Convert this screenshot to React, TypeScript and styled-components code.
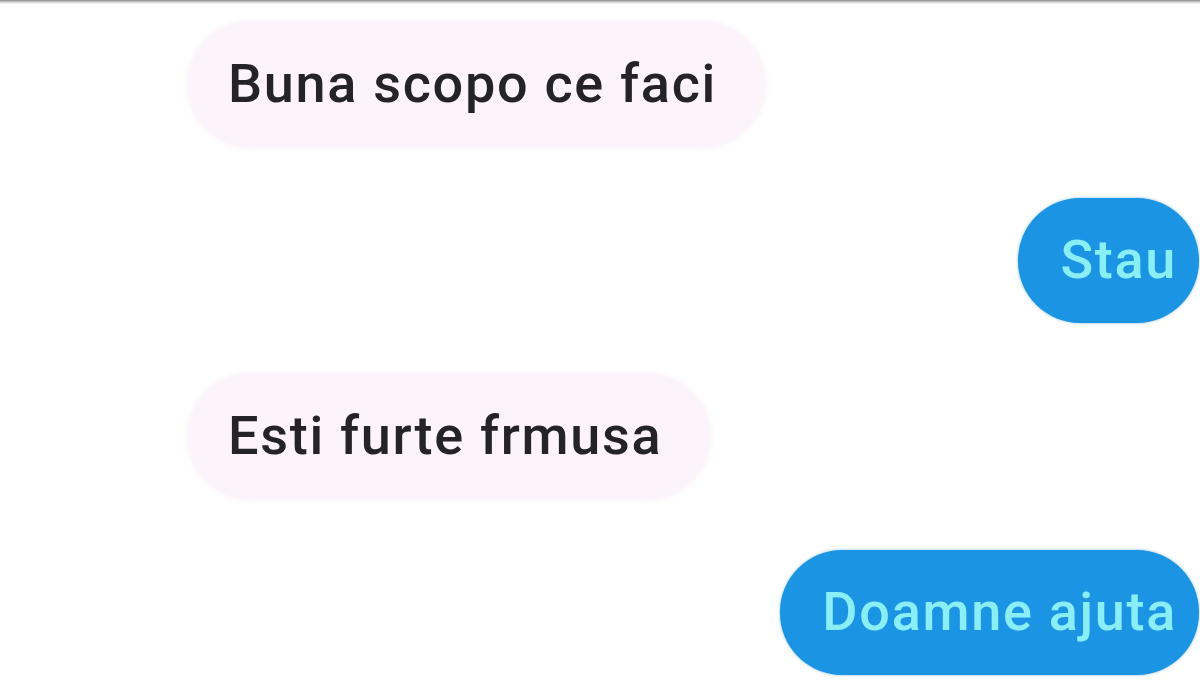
import React from "react";
import styled, { createGlobalStyle } from "styled-components";

const Global = createGlobalStyle`
  html, body { margin: 0; padding: 0; background: #ffffff; }
  body { font-family: Roboto, "Noto Sans", "Liberation Sans", sans-serif; }
`;

const Screen = styled.div`
  width: 1200px;
  height: 686px;
  overflow: hidden;
  background: #ffffff;
  display: flex;
  flex-direction: column;
`;

const TopEdge = styled.div`
  height: 4px;
  flex: none;
  background: linear-gradient(#8f8f8f, #d6d6d6 60%, #fdfdfd);
`;

const Thread = styled.div`
  display: flex;
  flex-direction: column;
  gap: 51px;
  padding: 18px 0 0 0;
`;

const Row = styled.div<{ $mine?: boolean }>`
  display: flex;
  justify-content: ${(p) => (p.$mine ? "flex-end" : "flex-start")};
  padding: ${(p) => (p.$mine ? "0 1px 0 0" : "0 0 0 188px")};
`;

const Bubble = styled.div<{ $mine?: boolean }>`
  height: 125px;
  display: flex;
  align-items: center;
  border-radius: 62px;
  box-sizing: border-box;
  padding: ${(p) => (p.$mine ? "0 22px 2px 42px" : "0 48px 2px 40px")};
  background: ${(p) => (p.$mine ? "#1b95e3" : "#fcf3fb")};
  color: ${(p) => (p.$mine ? "#8aeef7" : "#252326")};
  font-size: 54px;
  font-weight: 500;
  letter-spacing: 1.7px;
  white-space: nowrap;
  box-shadow: ${(p) =>
    p.$mine ? "0 0 3px rgba(20,120,190,0.5)" : "0 0 6px rgba(240,225,238,0.6)"};
`;

const messages: { text: string; mine?: boolean }[] = [
  { text: "Buna scopo ce faci" },
  { text: "Stau", mine: true },
  { text: "Esti furte frmusa" },
  { text: "Doamne ajuta", mine: true },
];

export default function App() {
  return (
    <>
      <Global />
      <Screen>
        <TopEdge />
        <Thread>
          {messages.map((m, i) => (
            <Row key={i} $mine={m.mine}>
              <Bubble $mine={m.mine}>{m.text}</Bubble>
            </Row>
          ))}
        </Thread>
      </Screen>
    </>
  );
}
